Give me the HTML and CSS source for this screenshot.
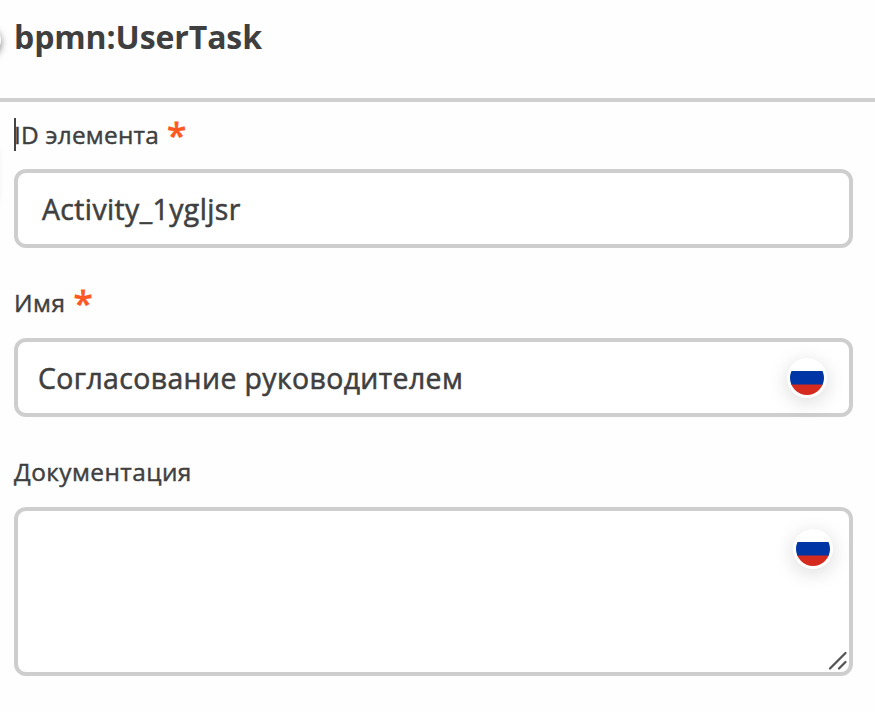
FILE: index.html
```html
<!DOCTYPE html>
<html lang="ru">
<head>
<meta charset="utf-8">
<title>bpmn:UserTask</title>
<link rel="stylesheet" href="styles.css">
</head>
<body>
<main class="panel">
  <span class="edge edge-round"></span>
  <span class="edge edge-soft"></span>
  <header class="header"><h1 class="title">bpmn:UserTask</h1></header>
  <section class="field">
    <div class="label"><span class="caret"></span><span class="name name-id">ID элемента</span><span class="required">*</span></div>
    <div class="box box-id"><span class="value value-id">Activity_1ygljsr</span></div>
  </section>
  <section class="field">
    <div class="label"><span class="name name-short">Имя</span><span class="required">*</span></div>
    <div class="box box-name"><span class="value value-name">Согласование руководителем</span>
      <span class="flag"><svg width="34" height="34" viewBox="0 0 34 34"><defs><clipPath id="c1"><circle cx="17" cy="17" r="17"/></clipPath></defs><g clip-path="url(#c1)"><path fill="#fff" d="M0 0h34v34H0z"/><path fill="#0035a5" d="M0 10h34v14H0z"/><path fill="#d52b1e" d="M0 23.5h34V34H0z"/></g></svg></span>
    </div>
  </section>
  <section class="field">
    <div class="label"><span class="name name-doc">Документация</span></div>
    <div class="box area">
      <span class="flag"><svg width="34" height="34" viewBox="0 0 34 34"><defs><clipPath id="c2"><circle cx="17" cy="17" r="17"/></clipPath></defs><g clip-path="url(#c2)"><path fill="#fff" d="M0 0h34v34H0z"/><path fill="#0035a5" d="M0 10h34v14H0z"/><path fill="#d52b1e" d="M0 23.5h34V34H0z"/></g></svg></span>
      <svg class="grip" width="20" height="20" viewBox="0 0 20 20"><path d="M2 17.5 17.5 2M11 17.500l6.500-6.500" fill="none" stroke="#555" stroke-width="2.300" stroke-linecap="round"/></svg>
    </div>
  </section>
</main>
</body>
</html>
```
FILE: styles.css
```css
* { box-sizing: border-box; }
body { margin: 0; background: #fefefe; color: #3f3f3f; font-family: "Open Sans", sans-serif; }
.panel { position: relative; width: 875px; height: 712px; overflow: hidden; }
.header { height: 102px; border-bottom: 4px solid #d0d0d0; padding: 15px 14px 0; }
.title { margin: 0; font-size: 32px; line-height: 44px; font-weight: 700; letter-spacing: -0.1px; }
.field { padding: 0 22px 0 14px; }
.label { position: relative; display: flex; align-items: center; height: 67px; padding-bottom: 1px; font-size: 24.4px; line-height: 34px; -webkit-text-stroke: 0.45px currentColor; }
.field + .field .label { height: 90px; padding-top: 21px; }
.name-id { letter-spacing: 0.22px; }
.name-short { letter-spacing: 0.5px; }
.name-doc { letter-spacing: 0.44px; }
.required { color: #ff5722; font-size: 35px; margin-left: 8px; -webkit-text-stroke: 0.9px #ff5722; }
.caret { position: absolute; left: 0; top: 16px; width: 2px; height: 33px; background: #444; }
.box { display: flex; align-items: center; justify-content: space-between; height: 79px; border: 4px solid #cecece; border-radius: 12px; background: #fff; }
.box-id { padding-left: 24px; }
.box-name { padding: 0 22px 0 20px; }
.value { font-size: 28.4px; line-height: 40px; -webkit-text-stroke: 0.55px currentColor; }
.value-id { letter-spacing: 0.4px; }
.value-name { letter-spacing: 0.4px; }
.area { position: relative; height: 169px; align-items: flex-start; justify-content: flex-end; padding: 18px 16px 0; }
.flag { width: 40px; height: 40px; padding: 3px; border-radius: 50%; background: #fff; box-shadow: 0 4px 20px rgba(0, 0, 0, .15); }
.flag svg { display: block; }
.grip { position: absolute; right: 1px; bottom: 1px; }
.edge { position: absolute; border-radius: 50%; }
.edge-round { left: -29px; top: 25px; width: 30px; height: 30px; box-shadow: 0 3px 7px rgba(0, 0, 0, .5); }
.edge-soft { left: -20px; top: 147px; width: 18px; height: 55px; border-radius: 5px; box-shadow: 0 1px 6px rgba(0, 0, 0, .1); }
```
